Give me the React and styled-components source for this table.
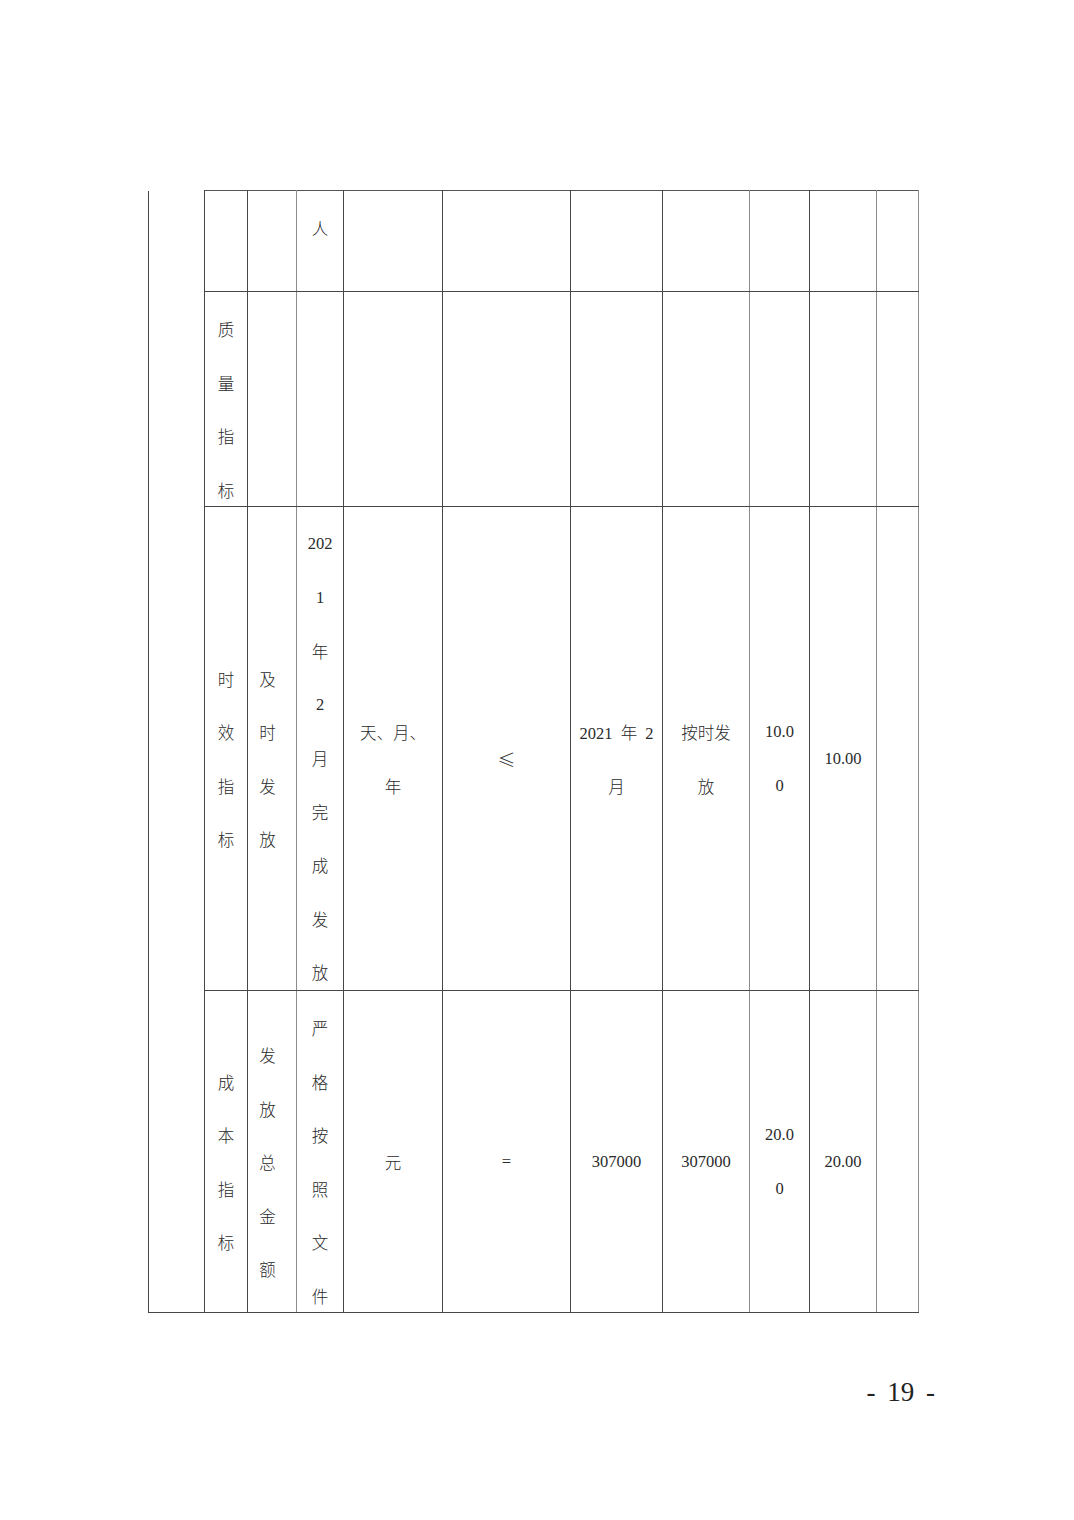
import React from "react";
import styled, { createGlobalStyle } from "styled-components";

const Global = createGlobalStyle`
  html, body { margin: 0; padding: 0; background: #fff; }
  body { font-family: "Liberation Serif", "Noto Sans CJK SC", serif; color: #2a2a2a; }
`;

const Page = styled.div`
  width: 1074px;
  height: 1520px;
  box-sizing: border-box;
  padding: 190px 0 0 148px;
`;

const Table = styled.table`
  border-collapse: collapse;
  table-layout: fixed;
  width: 771px;
`;

const Row = styled.tr`
  height: ${(p) => p.$h}px;
`;

const DARK = "#474747";
const LIGHT = "#8c8c8c";

const Side = styled.td`
  padding: 0;
  border-left: 1px solid ${DARK};
  border-right: 1px solid ${DARK};
  border-bottom: 1px solid ${DARK};
  border-top: none;
`;

const Cell = styled.td`
  padding: 0 ${(p) => p.$indent || 0}px 0 0;
  border-top: 1px solid #555;
  border-bottom: 1px solid ${DARK};
  border-left: 1px solid ${(p) => (p.$lightLeft ? LIGHT : DARK)};
  border-right: 1px solid ${(p) => (p.$lightRight ? LIGHT : DARK)};
  vertical-align: ${(p) => (p.$top ? "top" : "middle")};
  text-align: center;
  font-size: 16.5px;
  word-spacing: 4px;
  overflow: hidden;
`;

const Line = styled.div`
  height: 53.5px;
  box-sizing: border-box;
  padding-top: 21px;
  display: flex;
  align-items: center;
  justify-content: center;
  white-space: nowrap;
  font-weight: 300;
`;

const Symbol = styled.span`
  font-family: "Noto Sans CJK SC", sans-serif;
  font-size: 18px;
  font-weight: 300;
`;

const PageNumber = styled.div`
  width: 787px;
  margin-top: 64px;
  text-align: right;
  font-family: "Liberation Serif", serif;
  font-size: 27px;
  line-height: 30px;
  color: #222;
  word-spacing: 5px;
`;

const widths = [56, 43, 49, 47, 99, 128, 92, 87, 60, 67, 42];
// right borders light after col index (1-based data col): 2, 7, 9, 10
const lightRight = new Set([2, 7, 9, 10]);
const indents = { 2: 9 };

const rows = [
  {
    h: 101,
    cells: [[], [], { top: true, lines: ["人"] }, [], [], [], [], [], [], []],
  },
  {
    h: 215,
    cells: [["质", "量", "指", "标"], [], [], [], [], [], [], [], [], []],
  },
  {
    h: 484,
    cells: [
      ["时", "效", "指", "标"],
      ["及", "时", "发", "放"],
      { top: true, lines: ["202", "1", "年", "2", "月", "完", "成", "发", "放"] },
      ["天、月、", "年"],
      [<Symbol key="s">≤</Symbol>],
      ["2021 年 2", "月"],
      ["按时发", "放"],
      ["10.0", "0"],
      ["10.00"],
      [],
    ],
  },
  {
    h: 322,
    cells: [
      ["成", "本", "指", "标"],
      ["发", "放", "总", "金", "额"],
      { top: true, lines: ["严", "格", "按", "照", "文", "件"] },
      ["元"],
      ["="],
      ["307000"],
      ["307000"],
      ["20.0", "0"],
      ["20.00"],
      [],
    ],
  },
];

export default function App() {
  return (
    <>
      <Global />
      <Page>
        <Table>
          <colgroup>
            {widths.map((w, i) => (
              <col key={i} style={{ width: w }} />
            ))}
          </colgroup>
          <tbody>
            {rows.map((r, ri) => (
              <Row key={ri} $h={r.h}>
                {ri === 0 && <Side rowSpan={rows.length} />}
                {r.cells.map((c, ci) => {
                  const col = ci + 1;
                  const lines = Array.isArray(c) ? c : c.lines;
                  const top = !Array.isArray(c) && c.top;
                  return (
                    <Cell
                      key={ci}
                      $top={top}
                      $indent={indents[col]}
                      $lightRight={lightRight.has(col)}
                      $lightLeft={lightRight.has(col - 1)}
                    >
                      {lines.map((t, li) => (
                        <Line key={li}>{t}</Line>
                      ))}
                    </Cell>
                  );
                })}
              </Row>
            ))}
          </tbody>
        </Table>
        <PageNumber>- 19 -</PageNumber>
      </Page>
    </>
  );
}
